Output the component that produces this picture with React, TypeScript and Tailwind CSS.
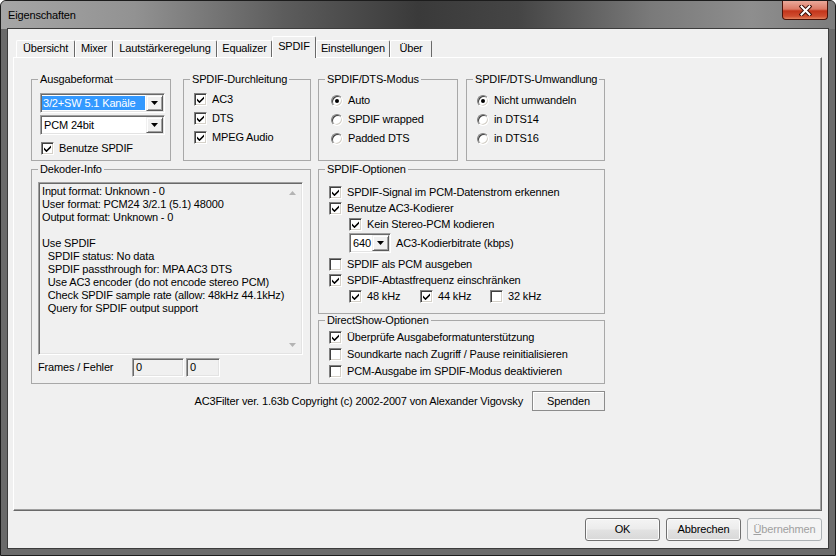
import React from 'react';

// Classic Win32 controls inside a Win7 frame

const sunken =
  'border border-t-[#a0a0a0] border-l-[#a0a0a0] border-r-white border-b-white shadow-[inset_1px_1px_0_#696969,inset_-1px_-1px_0_#e3e3e3]';

function Check({ checked }: { checked?: boolean }) {
  return (
    <span className="w-[13px] h-[13px] shrink-0 bg-white border border-t-[#808080] border-l-[#808080] border-r-white border-b-white shadow-[inset_1px_1px_0_#404040,inset_-1px_-1px_0_#d4d0c8] flex items-center justify-center">
      {checked && (
        <svg width="7" height="7" viewBox="0 0 7 7">
          <path d="M0 2.5L2.5 5L7 0.5V2.8L2.5 7.2L0 4.8Z" fill="#000" />
        </svg>
      )}
    </span>
  );
}

function Radio({ checked }: { checked?: boolean }) {
  return (
    <span className="w-[12px] h-[12px] shrink-0 rounded-full bg-white border border-t-[#808080] border-l-[#808080] border-r-white border-b-white shadow-[inset_1px_1px_0_#404040,inset_-1px_-1px_0_#d4d0c8] flex items-center justify-center">
      {checked && <span className="w-[4px] h-[4px] rounded-full bg-black" />}
    </span>
  );
}

function CheckRow({ label, checked, className = '' }: { label: string; checked?: boolean; className?: string }) {
  return (
    <div className={`flex items-center gap-[5px] ${className}`}>
      <Check checked={checked} />
      <span className="whitespace-nowrap">{label}</span>
    </div>
  );
}

function RadioRow({ label, checked }: { label: string; checked?: boolean }) {
  return (
    <div className="flex items-center gap-[5px] h-[19px]">
      <Radio checked={checked} />
      <span className="whitespace-nowrap">{label}</span>
    </div>
  );
}

function Arrow() {
  return (
    <svg width="7" height="4" viewBox="0 0 7 4">
      <path d="M0 0H7L3.5 4Z" fill="#000" />
    </svg>
  );
}

function Combo({ text, selected, className = '' }: { text: string; selected?: boolean; className?: string }) {
  return (
    <div className={`h-[20px] bg-white flex items-stretch ${sunken} ${className}`}>
      <div className="flex-1 flex items-center px-[1px] py-[2px] min-w-0">
        {selected ? (
          <span className="flex-1 h-full bg-[#3399ff] text-white flex items-center pl-[1px] whitespace-nowrap">{text}</span>
        ) : (
          <span className="pl-[2px] whitespace-nowrap">{text}</span>
        )}
      </div>
      <div className="w-[17px] my-[1px] mr-[1px] bg-[#f0f0f0] border border-t-[#f0f0f0] border-l-[#f0f0f0] border-r-[#5a5a5a] border-b-[#5a5a5a] shadow-[inset_1px_1px_0_#fff,inset_-1px_-1px_0_#a0a0a0] flex items-center justify-center">
        <Arrow />
      </div>
    </div>
  );
}

function Group({ title, className = '', children }: { title: string; className?: string; children?: React.ReactNode }) {
  return (
    <fieldset className={`border border-[#a8a8a8] min-w-0 ${className}`}>
      <legend className="ml-[6px] px-[2px] leading-[13px]">{title}</legend>
      {children}
    </fieldset>
  );
}

const tabs: [string, string, boolean][] = [
  ['Übersicht', 'w-[59px]', false],
  ['Mixer', 'w-[38px]', false],
  ['Lautstärkeregelung', 'w-[104px]', false],
  ['Equalizer', 'w-[55px]', false],
  ['SPDIF', 'w-[44px]', true],
  ['Einstellungen', 'w-[74px]', false],
  ['Über', 'w-[42px]', false],
];

const infoLines = [
  'Input format: Unknown - 0',
  'User format: PCM24 3/2.1 (5.1) 48000',
  'Output format: Unknown - 0',
  ' ',
  'Use SPDIF',
  '  SPDIF status: No data',
  '  SPDIF passthrough for: MPA AC3 DTS',
  '  Use AC3 encoder (do not encode stereo PCM)',
  '  Check SPDIF sample rate (allow: 48kHz 44.1kHz)',
  '  Query for SPDIF output support',
];

function ScrollArrow({ up }: { up?: boolean }) {
  return (
    <div className="h-[17px] flex items-center justify-center">
      <svg width="7" height="4" viewBox="0 0 7 4">
        <path d={up ? 'M0 4H7L3.5 0Z' : 'M0 0H7L3.5 4Z'} fill="#b4b4b4" />
      </svg>
    </div>
  );
}

export default function App() {
  return (
    <div className="w-[836px] h-[556px] bg-[#6a6a6a] border border-[#1c1c1c] rounded-t-[6px] overflow-hidden font-['Liberation_Sans',Arial,sans-serif] text-[11px] leading-[13px] tracking-[-0.15px] text-black">
      {/* title bar */}
      <div className="h-[28px] flex justify-between items-start bg-[linear-gradient(90deg,#a6a6a6_0%,#929292_16%,#5c5c5c_34%,#3a3a3a_50%,#454545_62%,#7a7a7a_78%,#8e8e8e_90%,#7c7c7c_100%)]">
        <span className="mt-[8px] ml-[7px] text-[11px] leading-[13px] text-black">Eigenschaften</span>
        <div className="mr-[7px] w-[46px] h-[19px] rounded-b-[4px] border border-t-0 border-[#4a1208] bg-[linear-gradient(180deg,#eaa99a_0%,#dc7a66_45%,#c3351b_55%,#cf4d2f_85%,#e2845f_100%)] flex items-center justify-center">
          <svg width="13" height="11" viewBox="0 0 13 11">
            <path d="M2.5 1.5L10.5 9.5M10.5 1.5L2.5 9.5" stroke="#3a0d05" strokeWidth="4" strokeLinecap="square" />
            <path d="M2.5 1.5L10.5 9.5M10.5 1.5L2.5 9.5" stroke="#ffffff" strokeWidth="2" strokeLinecap="square" />
          </svg>
        </div>
      </div>

      {/* client area */}
      <div className="ml-[7px] w-[820px] h-[519px] bg-[#f0f0f0] shadow-[0_0_0_1px_#3c3c3c] pt-[7px] pl-[5px] flex flex-col">
        {/* tabs */}
        <div className="h-[21px] pl-[3px] flex items-end">
          {tabs.map(([label, w, sel]) =>
            sel ? (
              <div
                key={label}
                className={`${w} h-[22px] -mb-[1px] relative z-10 bg-[#f0f0f0] border border-b-0 border-t-white border-l-white border-r-[#696969] rounded-t-[2px] flex justify-center pt-[3px]`}
              >
                {label}
              </div>
            ) : (
              <div
                key={label}
                className={`${w} h-[17px] border border-b-0 border-t-white border-l-white border-r-[#696969] rounded-t-[2px] flex justify-center pt-[1px]`}
              >
                {label}
              </div>
            )
          )}
        </div>

        {/* panel */}
        <div className="w-[809px] h-[454px] border border-t-white border-l-white border-r-[#696969] border-b-[#696969] shadow-[inset_-1px_-1px_0_#a0a0a0] pl-[17px] pt-[15px]">
          <div className="w-[574px] flex flex-col">
            {/* row 1 */}
            <div className="flex">
              <Group title="Ausgabeformat" className="w-[140px] h-[88px]">
                <div className="pt-[7px] pl-[8px] flex flex-col">
                  <Combo className="w-[125px]" text="3/2+SW 5.1 Kanäle" selected />
                  <Combo className="w-[125px] mt-[2px]" text="PCM 24bit" />
                  <CheckRow className="h-[16px] mt-[5px] pl-[1px] gap-[4px]" label="Benutze SPDIF" checked />
                </div>
              </Group>
              <Group title="SPDIF-Durchleitung" className="w-[128px] h-[88px] ml-[12px]">
                <div className="pt-[4px] pl-[10px]">
                  <CheckRow className="h-[19px]" label="AC3" checked />
                  <CheckRow className="h-[19px]" label="DTS" checked />
                  <CheckRow className="h-[19px]" label="MPEG Audio" checked />
                </div>
              </Group>
              <Group title="SPDIF/DTS-Modus" className="w-[140px] h-[88px] ml-[7px]">
                <div className="pt-[5px] pl-[12px]">
                  <RadioRow label="Auto" checked />
                  <RadioRow label="SPDIF wrapped" />
                  <RadioRow label="Padded DTS" />
                </div>
              </Group>
              <Group title="SPDIF/DTS-Umwandlung" className="w-[139px] h-[88px] ml-[8px]">
                <div className="pt-[5px] pl-[10px]">
                  <RadioRow label="Nicht umwandeln" checked />
                  <RadioRow label="in DTS14" />
                  <RadioRow label="in DTS16" />
                </div>
              </Group>
            </div>

            {/* row 2 */}
            <div className="flex mt-[2px]">
              <Group title="Dekoder-Info" className="w-[280px] h-[221px]">
                <div className="pl-[6px] pt-[6px]">
                  <div className={`w-[265px] h-[173px] flex bg-[#f0f0f0] ${sunken}`}>
                    <div className="flex-1 pl-[3px] pt-[2px] whitespace-pre leading-[13px]">
                      {infoLines.map((l, i) => (
                        <div key={i}>{l}</div>
                      ))}
                    </div>
                    <div className="w-[17px] flex flex-col justify-between py-[1px] mr-[1px]">
                      <ScrollArrow up />
                      <ScrollArrow />
                    </div>
                  </div>
                  <div className="flex items-center mt-[3px] h-[19px]">
                    <span className="w-[94px]">Frames / Fehler</span>
                    <div className={`w-[52px] h-[19px] bg-[#f0f0f0] flex items-center pl-[3px] ${sunken}`}>0</div>
                    <div className={`w-[34px] h-[19px] ml-[2px] bg-[#f0f0f0] flex items-center pl-[3px] ${sunken}`}>0</div>
                  </div>
                </div>
              </Group>

              <div className="ml-[7px] w-[287px] flex flex-col">
                <Group title="SPDIF-Optionen" className="w-[287px] h-[151px]">
                  <div className="pt-[8px] pl-[10px] flex flex-col">
                    <CheckRow className="h-[16px]" label="SPDIF-Signal im PCM-Datenstrom erkennen" checked />
                    <CheckRow className="h-[16px]" label="Benutze AC3-Kodierer" checked />
                    <CheckRow className="h-[16px] pl-[20px]" label="Kein Stereo-PCM kodieren" checked />
                    <div className="flex items-center mt-[1px] pl-[20px] gap-[5px]">
                      <Combo className="w-[42px]" text="640" />
                      <span>AC3-Kodierbitrate (kbps)</span>
                    </div>
                    <CheckRow className="h-[16px] mt-[3px]" label="SPDIF als PCM ausgeben" />
                    <CheckRow className="h-[16px]" label="SPDIF-Abtastfrequenz einschränken" checked />
                    <div className="flex h-[16px] pl-[20px]">
                      <CheckRow className="w-[71px]" label="48 kHz" checked />
                      <CheckRow className="w-[70px]" label="44 kHz" checked />
                      <CheckRow label="32 kHz" />
                    </div>
                  </div>
                </Group>
                <Group title="DirectShow-Optionen" className="w-[287px] h-[70px]">
                  <div className="pt-[2px] pl-[10px]">
                    <CheckRow className="h-[17px]" label="Überprüfe Ausgabeformatunterstützung" checked />
                    <CheckRow className="h-[17px]" label="Soundkarte nach Zugriff / Pause reinitialisieren" />
                    <CheckRow className="h-[17px]" label="PCM-Ausgabe im SPDIF-Modus deaktivieren" />
                  </div>
                </Group>
              </div>
            </div>

            {/* copyright row */}
            <div className="flex justify-end items-center mt-[7px] h-[20px]">
              <span>AC3Filter ver. 1.63b Copyright (c) 2002-2007 von Alexander Vigovsky</span>
              <button className="ml-[9px] w-[73px] h-[20px] bg-[#f0f0f0] border border-[#8c8c8c] shadow-[inset_1px_1px_0_#fff] flex items-center justify-center">
                Spenden
              </button>
            </div>
          </div>
        </div>

        {/* dialog buttons */}
        <div className="w-[809px] mt-[7px] flex justify-end gap-[6px]">
          <button className="w-[75px] h-[23px] rounded-[3px] border border-[#707070] bg-[linear-gradient(180deg,#f4f4f4_0%,#ececec_48%,#e2e2e2_52%,#d8d8d8_100%)] shadow-[inset_0_0_0_1px_#fcfcfc] flex items-center justify-center">
            OK
          </button>
          <button className="w-[75px] h-[23px] rounded-[3px] border border-[#707070] bg-[linear-gradient(180deg,#f4f4f4_0%,#ececec_48%,#e2e2e2_52%,#d8d8d8_100%)] shadow-[inset_0_0_0_1px_#fcfcfc] flex items-center justify-center">
            Abbrechen
          </button>
          <button className="w-[75px] h-[23px] rounded-[3px] border border-[#adb2b5] bg-[#f4f4f4] text-[#a0a0a0] flex items-center justify-center">
            <span className="underline">Ü</span>bernehmen
          </button>
        </div>
      </div>
    </div>
  );
}
